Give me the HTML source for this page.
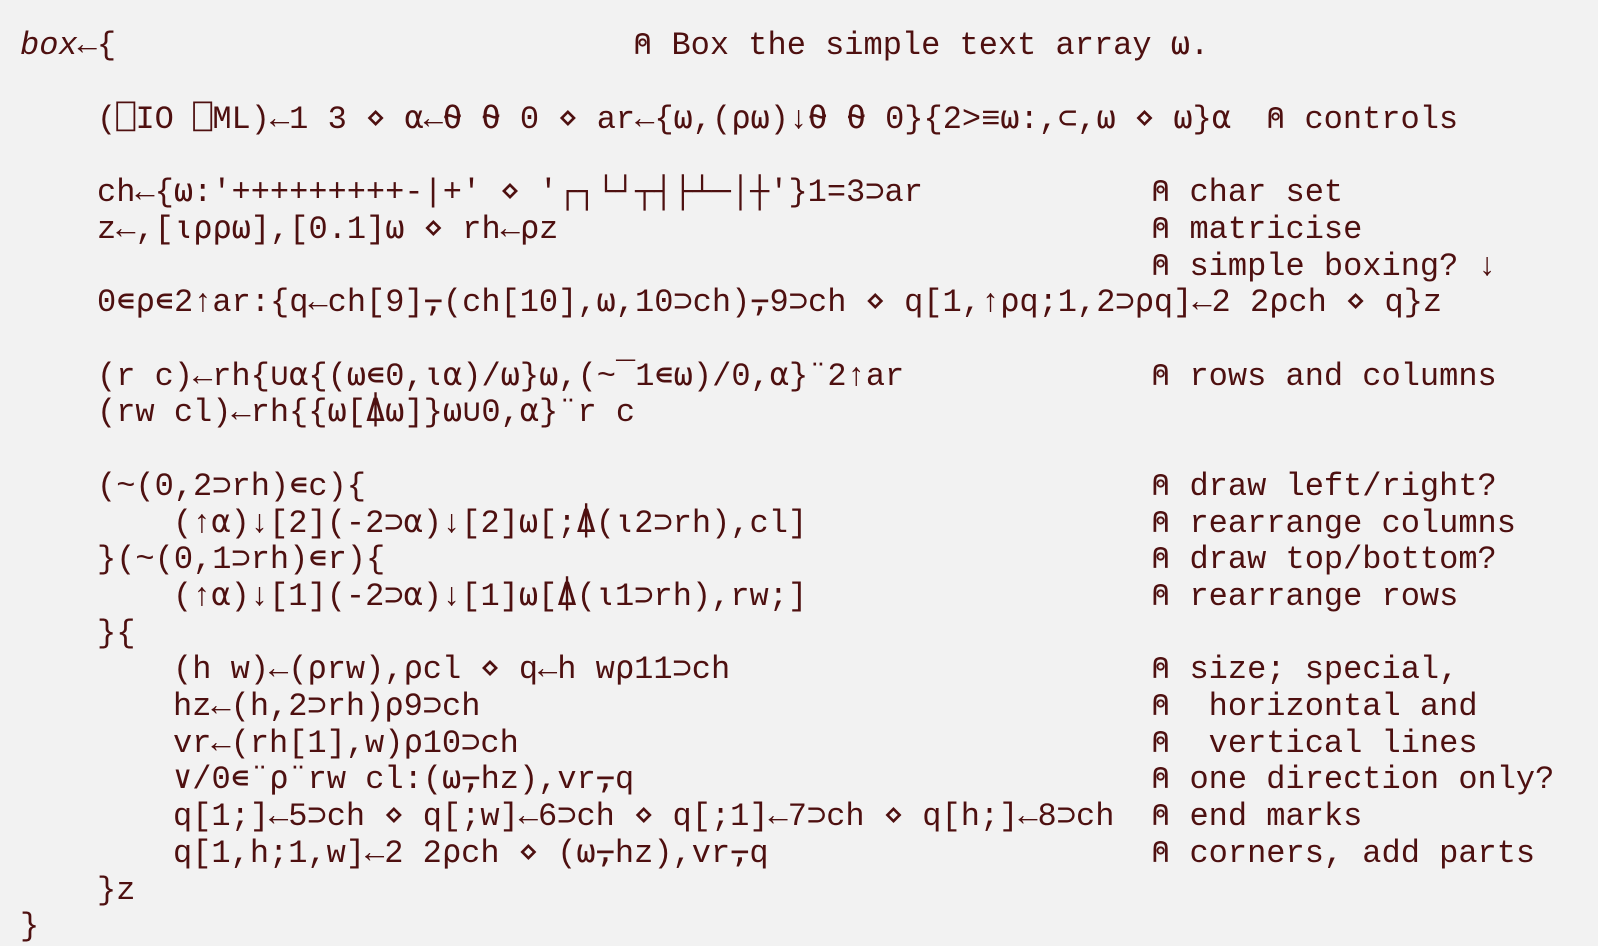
<!DOCTYPE html>
<html><head><meta charset="utf-8"><style>
html,body{margin:0;padding:0;background:#f2f2f2;width:1598px;height:946px;overflow:hidden}
body{position:relative;font-family:"Liberation Mono","DejaVu Sans Mono",monospace;font-size:32px;color:#4e1010}
#w{position:absolute;left:0;top:3px;width:1598px;height:940px}
.l{position:absolute;left:20px;height:36.7px;line-height:36.7px;white-space:pre}
.i1{left:97px}.i2{left:173px}
.c{left:1151px}
</style></head><body><div id="w">
<div class="l" style="top:25.4px"><i>box</i>←{</div>
<div class="l" style="top:25.4px;left:633px">⍝ Box the simple text array ⍵.</div>
<div class="l i1" style="top:98.8px">(⎕IO ⎕ML)←1 3 ⋄ ⍺←⍬ ⍬ 0 ⋄ ar←{⍵,(⍴⍵)↓⍬ ⍬ 0}{2&gt;≡⍵:,⊂,⍵ ⋄ ⍵}⍺</div>
<div class="l" style="top:98.8px;left:1266px">⍝ controls</div>
<div class="l i1" style="top:172.2px">ch←{⍵:'+++++++++-|+' ⋄ '┌┐└┘┬┤├┴─│┼'}1=3⊃ar</div>
<div class="l c" style="top:172.2px">⍝ char set</div>
<div class="l i1" style="top:208.9px">z←,[⍳⍴⍴⍵],[0.1]⍵ ⋄ rh←⍴z</div>
<div class="l c" style="top:208.9px">⍝ matricise</div>
<div class="l c" style="top:245.6px">⍝ simple boxing? ↓</div>
<div class="l i1" style="top:282.3px">0∊⍴∊2↑ar:{q←ch[9]⍪(ch[10],⍵,10⊃ch)⍪9⊃ch ⋄ q[1,↑⍴q;1,2⊃⍴q]←2 2⍴ch ⋄ q}z</div>
<div class="l i1" style="top:355.7px">(r c)←rh{∪⍺{(⍵∊0,⍳⍺)/⍵}⍵,(~¯1∊⍵)/0,⍺}¨2↑ar</div>
<div class="l c" style="top:355.7px">⍝ rows and columns</div>
<div class="l i1" style="top:392.4px">(rw cl)←rh{{⍵[⍋⍵]}⍵∪0,⍺}¨r c</div>
<div class="l i1" style="top:465.8px">(~(0,2⊃rh)∊c){</div>
<div class="l c" style="top:465.8px">⍝ draw left/right?</div>
<div class="l i2" style="top:502.5px">(↑⍺)↓[2](-2⊃⍺)↓[2]⍵[;⍋(⍳2⊃rh),cl]</div>
<div class="l c" style="top:502.5px">⍝ rearrange columns</div>
<div class="l i1" style="top:539.2px">}(~(0,1⊃rh)∊r){</div>
<div class="l c" style="top:539.2px">⍝ draw top/bottom?</div>
<div class="l i2" style="top:575.9px">(↑⍺)↓[1](-2⊃⍺)↓[1]⍵[⍋(⍳1⊃rh),rw;]</div>
<div class="l c" style="top:575.9px">⍝ rearrange rows</div>
<div class="l i1" style="top:612.6px">}{</div>
<div class="l i2" style="top:649.3px">(h w)←(⍴rw),⍴cl ⋄ q←h w⍴11⊃ch</div>
<div class="l c" style="top:649.3px">⍝ size; special,</div>
<div class="l i2" style="top:686px">hz←(h,2⊃rh)⍴9⊃ch</div>
<div class="l c" style="top:686px">⍝  horizontal and</div>
<div class="l i2" style="top:722.7px">vr←(rh[1],w)⍴10⊃ch</div>
<div class="l c" style="top:722.7px">⍝  vertical lines</div>
<div class="l i2" style="top:759.4px">∨/0∊¨⍴¨rw cl:(⍵⍪hz),vr⍪q</div>
<div class="l c" style="top:759.4px">⍝ one direction only?</div>
<div class="l i2" style="top:796.1px">q[1;]←5⊃ch ⋄ q[;w]←6⊃ch ⋄ q[;1]←7⊃ch ⋄ q[h;]←8⊃ch</div>
<div class="l c" style="top:796.1px">⍝ end marks</div>
<div class="l i2" style="top:832.8px">q[1,h;1,w]←2 2⍴ch ⋄ (⍵⍪hz),vr⍪q</div>
<div class="l c" style="top:832.8px">⍝ corners, add parts</div>
<div class="l i1" style="top:869.5px">}z</div>
<div class="l" style="top:906.2px">}</div>
</div></body></html>
